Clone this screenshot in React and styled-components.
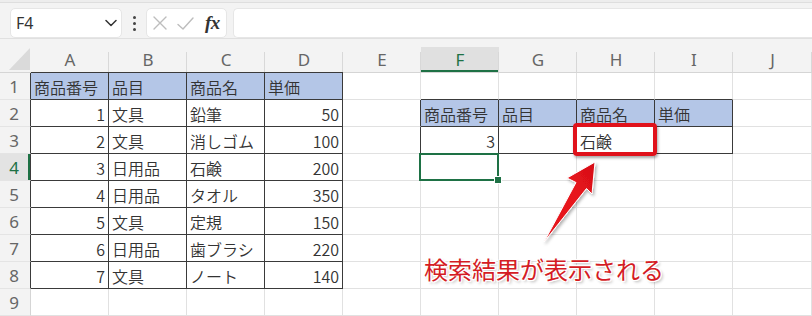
import React from "react";
import styled, { createGlobalStyle, css } from "styled-components";

const GlobalStyle = createGlobalStyle`
  html, body { margin: 0; padding: 0; background: #ffffff; }
  body { overflow: hidden; }
  * { box-sizing: border-box; }
`;

const GREEN = "#1e7145";
const DARK = "#3a3a3a";
const GRID = "#e1e1e1";
const BLUE = "#b4c6e7";

const Page = styled.div`
  position: relative;
  width: 812px;
  height: 316px;
  overflow: hidden;
  background: #ffffff;
  font-family: "Noto Sans", "Noto Sans CJK JP", sans-serif;
`;

const Toolbar = styled.div`
  display: flex;
  align-items: flex-start;
  height: 39px;
  padding: 8px 0 0 10px;
  background: linear-gradient(#ededed 0 2px, #dedede 2px 3px, #f3f3f3 3px);
  border-bottom: 1px solid #e0e0e0;
`;

const NameBox = styled.div`
  display: flex;
  align-items: center;
  justify-content: space-between;
  width: 112px;
  height: 30px;
  padding: 0 4px 0 5px;
  background: #ffffff;
  border: 1px solid #e6e6e6;
  border-radius: 5px;
`;

const NameText = styled.span`
  font-family: "Noto Sans", sans-serif;
  font-size: 16px;
  color: #333333;
  line-height: 1;
`;

const Kebab = styled.div`
  display: flex;
  flex-direction: column;
  align-items: center;
  justify-content: center;
  gap: 3px;
  width: 24px;
  height: 30px;
`;

const Dot = styled.span`
  width: 3px;
  height: 3px;
  border-radius: 50%;
  background: #444444;
`;

const FormulaButtons = styled.div`
  display: flex;
  align-items: center;
  width: 81px;
  height: 30px;
  padding: 0 4px 0 6px;
  gap: 10px;
  background: #ffffff;
  border: 1px solid #e6e6e6;
  border-radius: 5px;
`;

const Fx = styled.span`
  font-family: "Liberation Serif", "DejaVu Serif", serif;
  font-style: italic;
  font-weight: 700;
  font-size: 19px;
  color: #333333;
  margin-left: 1px;
  letter-spacing: -0.5px;
`;

const FormulaInput = styled.div`
  flex: 1;
  height: 30px;
  margin-left: 6px;
  background: #ffffff;
  border: 1px solid #e6e6e6;
  border-right: none;
  border-radius: 5px 0 0 5px;
`;

const Sheet = styled.div`
  display: grid;
  grid-template-columns: 31px repeat(9, 78px) 79px;
  grid-template-rows: 34px repeat(9, 27px);
  background: #ffffff;
`;

const Corner = styled.div`
  display: flex;
  justify-content: flex-end;
  align-items: flex-end;
  padding: 0 1px 2px 0;
  background: #f3f3f3;
  border-bottom: 1px solid #d5d5d5;
`;

const Triangle = styled.span`
  width: 0;
  height: 0;
  border-left: 21px solid transparent;
  border-bottom: 22px solid #dadada;
`;

const ColHeader = styled.div`
  position: relative;
  padding-top: 8px;
  background: #f3f3f3;
  border-bottom: 1px solid ${(p) => (p.$dark ? DARK : "#d5d5d5")};
  &::after {
    content: "";
    position: absolute;
    right: 0;
    top: 13px;
    bottom: 0;
    width: 1px;
    background: #d8d8d8;
  }
`;

const ColLabel = styled.div`
  display: flex;
  align-items: center;
  justify-content: center;
  height: 25px;
  font-family: "Noto Sans", sans-serif;
  font-size: 17px;
  color: #666666;
  ${(p) =>
    p.$selected &&
    css`
      background: #e0e0e0;
      color: ${GREEN};
      box-shadow: inset 0 -2px 0 ${GREEN};
    `}
`;

const RowHeader = styled.div`
  display: flex;
  align-items: center;
  justify-content: center;
  padding-right: 2px;
  font-family: "Noto Sans", sans-serif;
  font-size: 17px;
  color: #666666;
  background: #f3f3f3;
  border-bottom: 1px solid #e4e4e4;
  border-right: 1px solid ${(p) => (p.$dark ? DARK : "#d5d5d5")};
  ${(p) =>
    p.$selected &&
    css`
      background: #e3e3e3;
      color: ${GREEN};
      box-shadow: inset -2px 0 0 ${GREEN};
    `}
`;

const Cell = styled.div`
  position: relative;
  display: flex;
  align-items: center;
  justify-content: ${(p) => (p.$align === "right" ? "flex-end" : "flex-start")};
  padding: 1px 3px 0 3px;
  font-family: "Noto Sans CJK JP", "Noto Sans", sans-serif;
  font-size: 16px;
  font-weight: 350;
  color: #333333;
  white-space: nowrap;
  background: ${(p) => (p.$fill ? BLUE : "#ffffff")};
  border-right: 1px solid ${(p) => (p.$right ? DARK : GRID)};
  border-bottom: 1px solid ${(p) => (p.$bottom ? DARK : GRID)};
  ${(p) =>
    p.$selected &&
    css`
      &::after {
        content: "";
        position: absolute;
        left: -2px;
        top: -1px;
        right: -1px;
        bottom: -1px;
        border: 2px solid ${GREEN};
        pointer-events: none;
      }
      &::before {
        content: "";
        position: absolute;
        right: -4px;
        bottom: -4px;
        width: 6px;
        height: 6px;
        background: ${GREEN};
        border: 1px solid #ffffff;
        z-index: 2;
      }
    `}
`;

const HighlightBox = styled.div`
  position: absolute;
  left: 573px;
  top: 123px;
  width: 84px;
  height: 33px;
  border: 4px solid #e0121b;
  border-radius: 4px;
  box-shadow: 1px 2px 3px rgba(0, 0, 0, 0.35);
  pointer-events: none;
`;

const ArrowSvg = styled.svg`
  position: absolute;
  left: 0;
  top: 0;
  pointer-events: none;
  overflow: visible;
`;

const Callout = styled.div`
  position: absolute;
  left: 424px;
  top: 255px;
  height: 28px;
  line-height: 28px;
  font-family: "Noto Sans CJK JP", sans-serif;
  font-size: 24px;
  font-weight: 400;
  color: #d41c24;
  white-space: nowrap;
  text-shadow:
    1px 0 0 #fff, -1px 0 0 #fff, 0 1px 0 #fff, 0 -1px 0 #fff,
    1px 1px 0 #fff, -1px -1px 0 #fff, 1px -1px 0 #fff, -1px 1px 0 #fff,
    2px 2px 3px rgba(0, 0, 0, 0.3);
`;

const COLS = ["A", "B", "C", "D", "E", "F", "G", "H", "I", "J"];
const ROWS = 9;
const SELECTED = { r: 4, c: 6 };

const HEAD = ["商品番号", "品目", "商品名", "単価"];
const DATA = [
  [1, "文具", "鉛筆", 50],
  [2, "文具", "消しゴム", 100],
  [3, "日用品", "石鹸", 200],
  [4, "日用品", "タオル", 350],
  [5, "文具", "定規", 150],
  [6, "日用品", "歯ブラシ", 220],
  [7, "文具", "ノート", 140],
];

const cells = {};
const inTable = {};
HEAD.forEach((h, i) => {
  cells[`1-${i + 1}`] = { text: h, fill: true };
});
DATA.forEach((row, ri) => {
  row.forEach((v, ci) => {
    cells[`${ri + 2}-${ci + 1}`] = {
      text: String(v),
      align: typeof v === "number" ? "right" : "left",
    };
  });
});
for (let r = 1; r <= 8; r++) for (let c = 1; c <= 4; c++) inTable[`${r}-${c}`] = true;
HEAD.forEach((h, i) => {
  cells[`2-${i + 6}`] = { text: h, fill: true };
});
cells["3-6"] = { text: "3", align: "right" };
cells["3-8"] = { text: "石鹸" };
for (let r = 2; r <= 3; r++) for (let c = 6; c <= 9; c++) inTable[`${r}-${c}`] = true;

const isT = (r, c) => !!inTable[`${r}-${c}`];

function ChevronIcon() {
  return (
    <svg width="12" height="8" viewBox="0 0 12 8">
      <path d="M1 1.5 L6 6.5 L11 1.5" fill="none" stroke="#333" strokeWidth="1.5" strokeLinecap="round" strokeLinejoin="round" />
    </svg>
  );
}

function CancelIcon() {
  return (
    <svg width="14" height="14" viewBox="0 0 14 14">
      <path d="M1 1 L13 13 M13 1 L1 13" fill="none" stroke="#bdbdbd" strokeWidth="1.4" strokeLinecap="round" />
    </svg>
  );
}

function CheckIcon() {
  return (
    <svg width="17" height="13" viewBox="0 0 17 13">
      <path d="M1 7.5 L6 12 L16 1" fill="none" stroke="#bdbdbd" strokeWidth="1.4" strokeLinecap="round" strokeLinejoin="round" />
    </svg>
  );
}

function Arrow() {
  return (
    <ArrowSvg width="812" height="316" viewBox="0 0 812 316">
      <defs>
        <linearGradient id="arrowFill" x1="0" y1="1" x2="1" y2="0">
          <stop offset="0" stopColor="#e3141c" />
          <stop offset="0.6" stopColor="#e8141c" />
          <stop offset="1" stopColor="#d50f17" />
        </linearGradient>
        <filter id="arrowShadow" x="-20%" y="-20%" width="140%" height="140%">
          <feDropShadow dx="1.5" dy="2" stdDeviation="1.5" floodColor="#000" floodOpacity="0.3" />
        </filter>
      </defs>
      <polygon
        points="595,162 592,194 586.5,188.5 544,242 576,182.5 567,178"
        fill="url(#arrowFill)"
        stroke="#ffffff"
        strokeWidth="1"
        strokeLinejoin="round"
        filter="url(#arrowShadow)"
      />
    </ArrowSvg>
  );
}

export default function App() {
  const grid = [];
  grid.push(
    <Corner key="corner">
      <Triangle />
    </Corner>
  );
  COLS.forEach((l, i) => {
    grid.push(
      <ColHeader key={`h-${l}`} $dark={isT(1, i + 1)}>
        <ColLabel $selected={SELECTED.c === i + 1}>{l}</ColLabel>
      </ColHeader>
    );
  });
  for (let r = 1; r <= ROWS; r++) {
    grid.push(
      <RowHeader key={`r-${r}`} $dark={isT(r, 1)} $selected={SELECTED.r === r}>
        {r}
      </RowHeader>
    );
    for (let c = 1; c <= COLS.length; c++) {
      const cell = cells[`${r}-${c}`] || {};
      grid.push(
        <Cell
          key={`${r}-${c}`}
          $fill={cell.fill}
          $align={cell.align}
          $right={isT(r, c) || isT(r, c + 1)}
          $bottom={isT(r, c) || isT(r + 1, c)}
          $selected={SELECTED.r === r && SELECTED.c === c}
        >
          {cell.text}
        </Cell>
      );
    }
  }

  return (
    <>
      <GlobalStyle />
      <Page>
        <Toolbar>
          <NameBox>
            <NameText>F4</NameText>
            <ChevronIcon />
          </NameBox>
          <Kebab>
            <Dot />
            <Dot />
            <Dot />
          </Kebab>
          <FormulaButtons>
            <CancelIcon />
            <CheckIcon />
            <Fx>fx</Fx>
          </FormulaButtons>
          <FormulaInput />
        </Toolbar>
        <Sheet>{grid}</Sheet>
        <HighlightBox />
        <Arrow />
        <Callout>検索結果が表示される</Callout>
      </Page>
    </>
  );
}
